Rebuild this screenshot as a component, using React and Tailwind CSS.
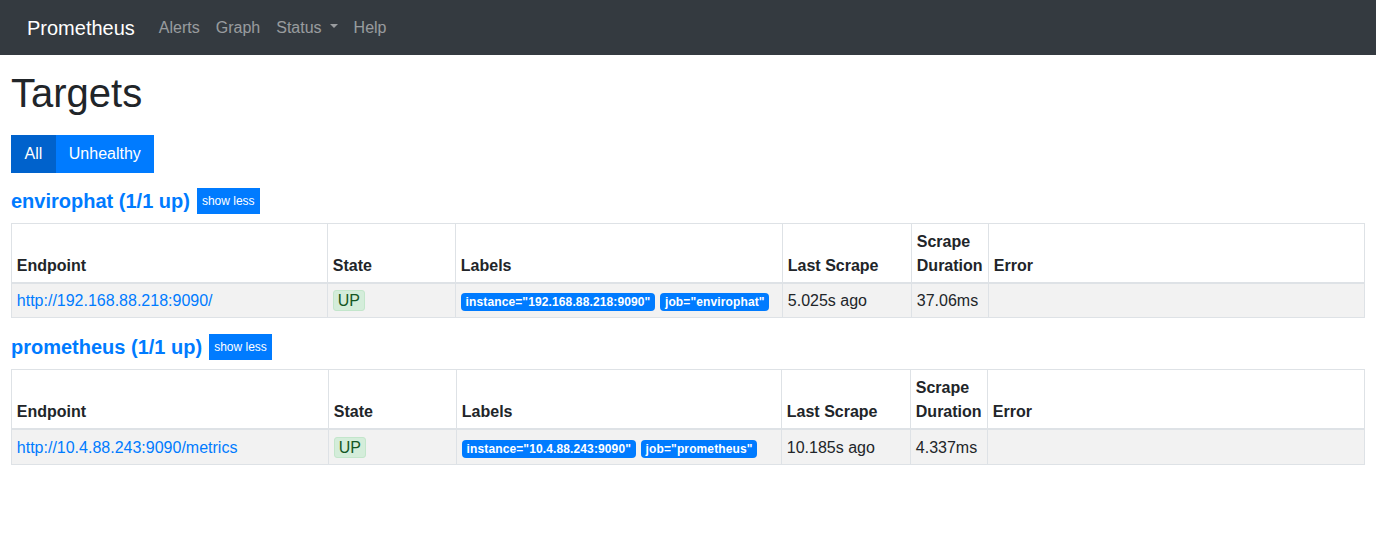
import React from "react";

const font = { fontFamily: '"Liberation Sans", Arial, sans-serif' };

function Caret() {
  return (
    <span className="inline-block w-0 h-0 ml-[8px] align-[0.255em] border-t-[4.8px] border-t-current border-x-[4.5px] border-x-transparent" />
  );
}

function Section({ name, widths, endpoint, labels, last, dur }) {
  return (
    <div className="mb-[16px]">
      <div className="flex items-center mb-[9px]">
        <span className="text-[20px] font-bold text-[#007bff] leading-[24px]">{name} (1/1 up)</span>
        <button className="ml-[7px] bg-[#007bff] text-white text-[12px] leading-[18px] px-[5px] py-[4px]">show less</button>
      </div>
      <table className="w-full table-fixed border-collapse border border-[#dee2e6] text-[16px] text-[#212529]">
        <colgroup>
          {widths.map((w, i) => (
            <col key={i} style={{ width: w + "px" }} />
          ))}
        </colgroup>
        <thead>
          <tr>
            {["Endpoint", "State", "Labels", "Last Scrape", "Scrape Duration", "Error"].map((h) => (
              <th key={h} className="text-left align-bottom font-bold leading-[24px] px-[4.8px] pt-[5.6px] pb-[4.2px] border border-[#dee2e6] border-b-2">
                {h}
              </th>
            ))}
          </tr>
        </thead>
        <tbody>
          <tr className="bg-[#f2f2f2]">
            <td className="px-[4.8px] pt-[5.6px] pb-[4px] leading-[24px] border border-[#dee2e6] align-top">
              <span className="text-[#007bff]">{endpoint}</span>
            </td>
            <td className="px-[4.8px] pt-[5.6px] pb-[4px] leading-[24px] border border-[#dee2e6] align-top">
              <span className="inline-block bg-[#d4edda] border border-[#c3e6cb] text-[#155724] rounded-[3px] px-[4px] leading-[19px]">UP</span>
            </td>
            <td className="px-[4.8px] pt-[5.6px] pb-[4px] leading-[24px] border border-[#dee2e6] align-top">
              {labels.map((l, i) => (
                <span key={i} className="inline-block bg-[#007bff] text-white font-bold text-[12px] tracking-[0.12px] leading-[12px] px-[4.8px] py-[3px] rounded-[4px] mr-[5px] align-baseline">
                  {l}
                </span>
              ))}
            </td>
            <td className="px-[4.8px] pt-[5.6px] pb-[4px] leading-[24px] border border-[#dee2e6] align-top">{last}</td>
            <td className="px-[4.8px] pt-[5.6px] pb-[4px] leading-[24px] border border-[#dee2e6] align-top">{dur}</td>
            <td className="px-[4.8px] pt-[5.6px] pb-[4px] leading-[24px] border border-[#dee2e6] align-top"></td>
          </tr>
        </tbody>
      </table>
    </div>
  );
}

export default function App() {
  return (
    <div style={font} className="bg-white min-h-[548px] text-[#212529]">
      <nav className="h-[55px] bg-[#343a40] flex items-center pl-[27px]">
        <span className="text-white text-[20px] leading-[30px] mr-[16px]">Prometheus</span>
        <a className="text-white/50 text-[16px] leading-[24px] px-[8px]">Alerts</a>
        <a className="text-white/50 text-[16px] leading-[24px] px-[8px]">Graph</a>
        <a className="text-white/50 text-[16px] leading-[24px] px-[8px]">
          Status
          <Caret />
        </a>
        <a className="text-white/50 text-[16px] leading-[24px] px-[8px]">Help</a>
      </nav>
      <div className="pl-[11px] pr-[12px] pt-[14px]">
        <h1 className="text-[40px] leading-[48px] font-normal mb-[18px]">Targets</h1>
        <div className="flex mb-[15px]">
          <button className="bg-[#0062cc] text-white text-[16px] leading-[24px] px-[13.5px] py-[7px]">All</button>
          <button className="bg-[#007bff] text-white text-[16px] leading-[24px] px-[13px] py-[7px]">Unhealthy</button>
        </div>
        <Section
          name="envirophat"
          widths={[316, 128, 327, 129, 77, 376]}
          endpoint="http://192.168.88.218:9090/"
          labels={['instance="192.168.88.218:9090"', 'job="envirophat"']}
          last="5.025s ago"
          dur="37.06ms"
        />
        <Section
          name="prometheus"
          widths={[317, 128, 325, 129, 77, 377]}
          endpoint="http://10.4.88.243:9090/metrics"
          labels={['instance="10.4.88.243:9090"', 'job="prometheus"']}
          last="10.185s ago"
          dur="4.337ms"
        />
      </div>
    </div>
  );
}
